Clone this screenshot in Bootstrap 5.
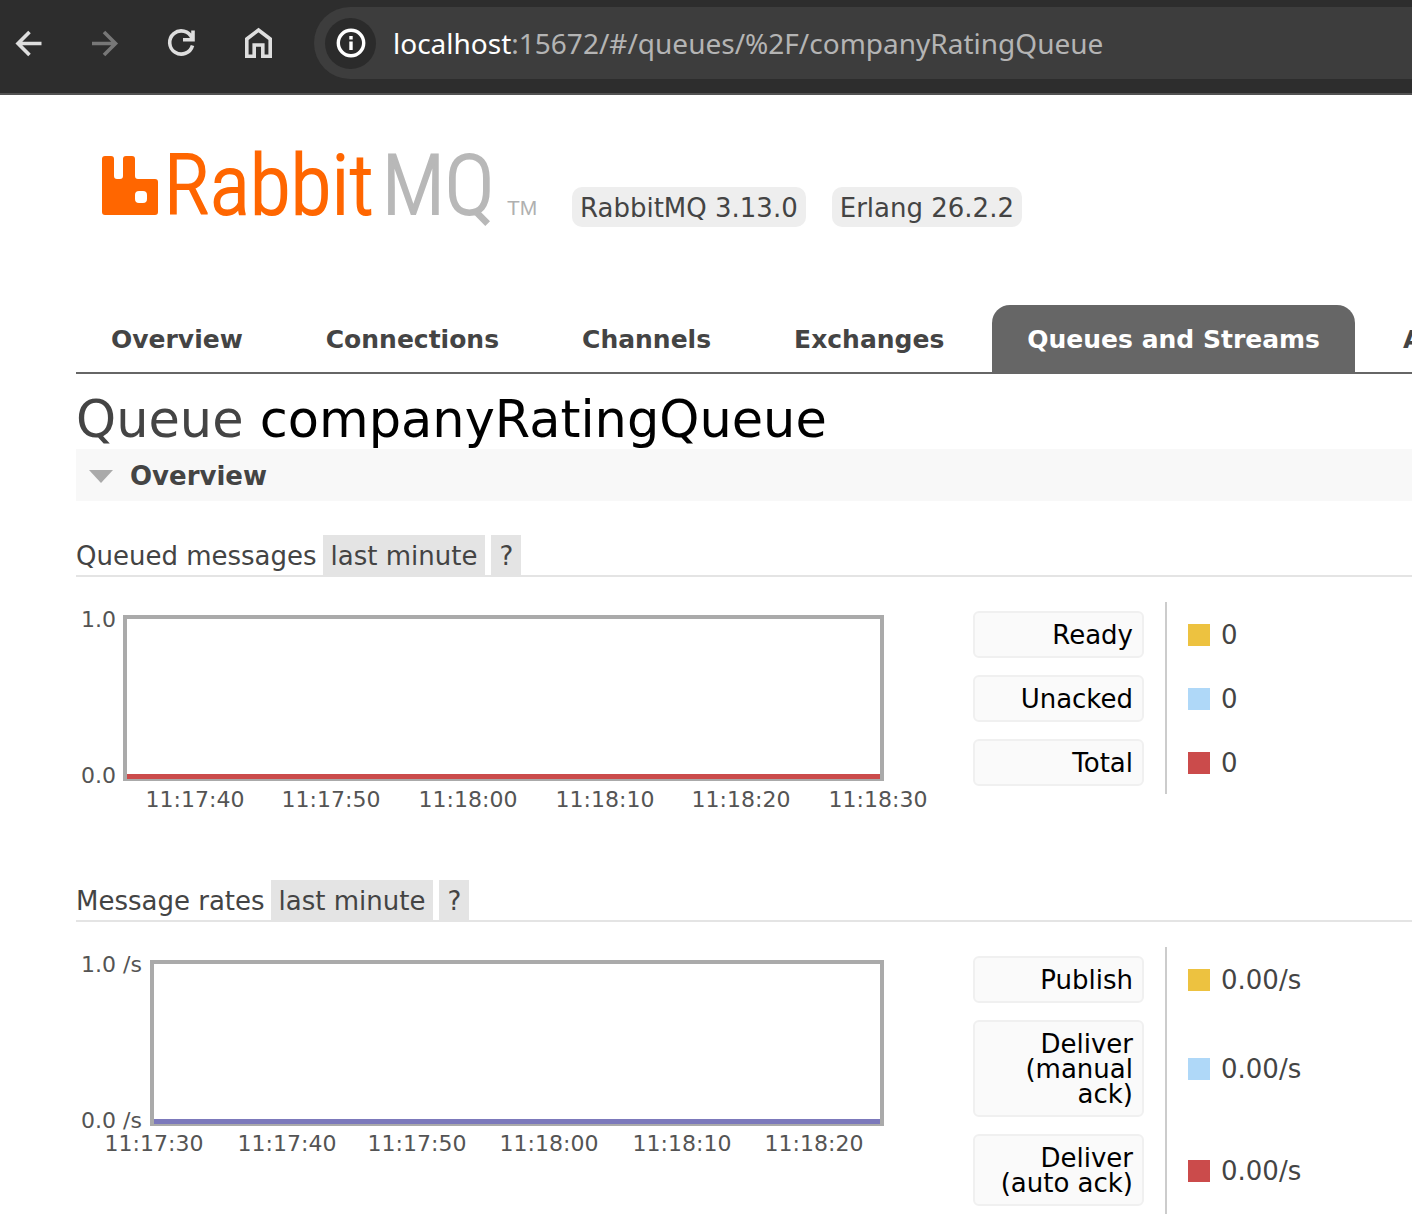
<!DOCTYPE html>
<html lang="en">
<head>
<meta charset="utf-8">
<meta name="viewport" content="width=device-width, initial-scale=1">
<title>RabbitMQ Management</title>
<link rel="stylesheet" href="https://cdn.jsdelivr.net/npm/bootstrap@5.3.0/dist/css/bootstrap.min.css">
<style>
body { font-family: "DejaVu Sans", sans-serif; font-size: 26px; line-height: 40px; color: #444; overflow-x: hidden; }
.browser-bar { height: 95px; background: #2d2d2d; border-bottom: 2px solid #525252; padding: 0 0 7px 10px; gap: 39px; overflow: hidden; }
.browser-bar button { width: 38px; height: 38px; color: #dedede; }
.browser-bar button:disabled { color: #777; border: 0; opacity: 1; }
.browser-bar svg { display: block; }
.address { height: 72px; background: #3d3d3d; border-radius: 36px 0 0 36px; padding-left: 11px; gap: 17px; margin-left: -4px; }
.browser-bar .site-info { width: 51px; height: 51px; border-radius: 50%; background: #2b2b2b; color: #fff; }
.url { font: 28px/40px "Noto Sans", sans-serif; color: #b4b4b4; white-space: nowrap; }
.url b { font-weight: 400; color: #fff; }
.page { padding-left: 76px; }
.brand-row { height: 210px; padding: 57px 0 0 26px; gap: 26px; }
.version { background: #eee; border-radius: 10px; padding: 2px 8px 0; line-height: 38px; margin-top: 35px; white-space: nowrap; }
.brand-logo { margin-right: 8px; overflow: visible; }
.tabs { border-bottom: 2px solid #666; gap: 13px; overflow: hidden; }
.tabs a { font-size: 25px; font-weight: 700; color: #444; padding: 15px 35px 12px; line-height: 40px; border-radius: 18px 18px 0 0; }
.tabs a.active { background: #666; color: #fff; }
h1 { font-size: 51px; line-height: 58px; margin: 17px 0 0; font-weight: 400; color: #444; }
h1 b { font-weight: 400; color: #000; }
h2 { background: #f8f8f8; font-size: 26px; line-height: 50px; font-weight: 700; margin: 0 0 34px; padding-top: 2px; }
h2 button { font-weight: 700; color: #444; padding-left: 13px; gap: 17px; }
h3 { font-size: 26px; line-height: 38px; font-weight: 400; margin: 0 0 25px; border-bottom: 2px solid #e4e4e4; gap: 6px; }
h3 span { padding-top: 2px; }
h3 button { background: #e4e4e4; color: #444; padding: 2px 8px 0; }
.panel { gap: 34px; }
.queued { margin-bottom: 38px; }
.plot { width: 863px; height: 240px; flex: none; }
.plot text { font-size: 22px; fill: #545454; }
.facts th { width: 193px; padding: 9px 21px 8px 0; border-right: 2px solid #ccc; font-weight: 400; }
.facts td { padding: 2px 0 0 21px; }
.facts a { display: block; background: #fafafa; border: 2px solid #f0f0f0; border-radius: 6px; padding: 10px 9px 8px; line-height: 25px; color: #000; text-align: right; }
.reading { gap: 11px; }
.swatch { width: 22px; height: 22px; }
.yellow { background: #edc240; } .blue { background: #afd8f8; } .red { background: #cb4b4b; }
</style>
<script src="https://cdn.jsdelivr.net/npm/bootstrap@5.3.0/dist/js/bootstrap.bundle.min.js"></script>
</head>
<body>
<header class="browser-bar d-flex align-items-center">
  <button class="border-0 bg-transparent p-0" aria-label="Back"><svg width="38" height="38" fill="none" stroke="currentColor" stroke-width="3.6"><path d="M31.500 19.500H8M19.500 8 8 19.500l11.500 11.500"/></svg></button>
  <button class="border-0 bg-transparent p-0" aria-label="Forward" disabled><svg width="38" height="38" fill="none" stroke="currentColor" stroke-width="3.600"><path d="M5 19.500h23.500M17 8 28.500 19.500 17 31"/></svg></button>
  <button class="border-0 bg-transparent p-0" aria-label="Reload"><svg width="38" height="38" fill="none" stroke="currentColor" stroke-width="3.600"><path d="M28 14A11.600 11.600 0 1 0 28.500 21.500M29 6.500v9.200H19"/></svg></button>
  <button class="border-0 bg-transparent p-0" aria-label="Home"><svg width="38" height="38" fill="none" stroke="currentColor" stroke-width="3.600"><path d="M5.800 32.300V15L17.500 6 29.200 15v17.300h-7.400V21h-8.600v11.300z"/></svg></button>
  <div class="address d-flex align-items-center flex-grow-1">
    <button class="site-info border-0 p-0 d-flex align-items-center justify-content-center" aria-label="Site information"><svg width="30" height="30" fill="none" stroke="currentColor" stroke-width="3.400"><circle cx="15" cy="15" r="12.700"/><path d="M15 13.500v8.500M15 8v3.400"/></svg></button>
    <span class="url"><b>localhost</b>:15672/#/queues/%2F/companyRatingQueue</span>
  </div>
</header>
<main class="page">
  <div class="brand-row d-flex align-items-start">
    <svg class="brand-logo" width="436" height="72" role="img" aria-label="RabbitMQ">
      <path fill="#f60" fill-rule="evenodd" d="M3 4H9Q12 4 12 7V24Q12 27 15 27H18Q21 27 21 24V7Q21 4 24 4H30Q33 4 33 7V24Q33 27 36 27H53Q56 27 56 30V60Q56 63 53 63H3Q0 63 0 60V7Q0 4 3 4ZM37 39Q33 39 33 43V47Q33 51 37 51H41Q45 51 45 47V43Q45 39 41 39Z"/>
      <g font-family="'Roboto Condensed','Liberation Sans Narrow','Liberation Sans',sans-serif" font-size="84" font-weight="300" stroke-width="2">
        <text x="62" y="62" fill="#f60" stroke="#f60">Rabbit</text><text x="280" y="62" fill="#b8b8b8" stroke="#b8b8b8">MQ</text>
      </g>
      <text x="405" y="63" font-family="Liberation Sans,sans-serif" font-size="21" fill="#b0b0b0">TM</text>
    </svg>
    <span class="version">RabbitMQ 3.13.0</span>
    <span class="version">Erlang 26.2.2</span>
  </div>
  <nav class="tabs d-flex text-nowrap">
    <a class="text-decoration-none" href="#/">Overview</a>
    <a class="text-decoration-none" href="#/connections">Connections</a>
    <a class="text-decoration-none" href="#/channels">Channels</a>
    <a class="text-decoration-none" href="#/exchanges">Exchanges</a>
    <a class="text-decoration-none active" href="#/queues" aria-current="page">Queues and Streams</a>
    <a class="text-decoration-none" href="#/users">Admin</a>
  </nav>
  <h1>Queue <b>companyRatingQueue</b></h1>
  <h2><button class="border-0 bg-transparent d-flex align-items-center py-0 w-100" aria-expanded="true"><svg width="24" height="13"><path d="M0 0h24L12 13z" fill="#aaa"/></svg>Overview</button></h2>

  <section class="queued">
    <h3 class="d-flex"><span>Queued messages</span> <button class="border-0">last minute</button> <button class="border-0">?</button></h3>
    <div class="panel d-flex align-items-start">
      <svg class="plot" role="img" aria-label="Queued messages, last minute">
        <rect x="49" y="15" width="757" height="162" fill="none" stroke="#aaa" stroke-width="4"/>
        <path d="M51 174.500H804" stroke="#cb4b4b" stroke-width="5"/>
        <text x="5" y="25">1.0</text><text x="5" y="181">0.0</text>
        <g text-anchor="middle"><text x="119" y="205">11:17:40</text><text x="255" y="205">11:17:50</text><text x="392" y="205">11:18:00</text><text x="529" y="205">11:18:10</text><text x="665" y="205">11:18:20</text><text x="802" y="205">11:18:30</text></g>
      </svg>
      <table class="facts">
        <tr><th scope="row"><a class="text-decoration-none" href="#ready">Ready</a></th><td><div class="reading d-flex align-items-center"><span class="swatch yellow"></span><span>0</span></div></td></tr>
        <tr><th scope="row"><a class="text-decoration-none" href="#unacked">Unacked</a></th><td><div class="reading d-flex align-items-center"><span class="swatch blue"></span><span>0</span></div></td></tr>
        <tr><th scope="row"><a class="text-decoration-none" href="#total">Total</a></th><td><div class="reading d-flex align-items-center"><span class="swatch red"></span><span>0</span></div></td></tr>
      </table>
    </div>
  </section>

  <section>
    <h3 class="d-flex"><span>Message rates</span> <button class="border-0">last minute</button> <button class="border-0">?</button></h3>
    <div class="panel d-flex align-items-start">
      <svg class="plot" role="img" aria-label="Message rates, last minute">
        <rect x="76" y="15" width="730" height="162" fill="none" stroke="#aaa" stroke-width="4"/>
        <path d="M78 174.500H804" stroke="#7c79bb" stroke-width="5"/>
        <text x="5" y="25">1.0 /s</text><text x="5" y="181">0.0 /s</text>
        <g text-anchor="middle"><text x="78" y="204">11:17:30</text><text x="211" y="204">11:17:40</text><text x="341" y="204">11:17:50</text><text x="473" y="204">11:18:00</text><text x="606" y="204">11:18:10</text><text x="738" y="204">11:18:20</text></g>
      </svg>
      <table class="facts">
        <tr><th scope="row"><a class="text-decoration-none" href="#publish">Publish</a></th><td><div class="reading d-flex align-items-center"><span class="swatch yellow"></span><span>0.00/s</span></div></td></tr>
        <tr><th scope="row"><a class="text-decoration-none" href="#manual">Deliver (manual ack)</a></th><td><div class="reading d-flex align-items-center"><span class="swatch blue"></span><span>0.00/s</span></div></td></tr>
        <tr><th scope="row"><a class="text-decoration-none" href="#auto">Deliver (auto ack)</a></th><td><div class="reading d-flex align-items-center"><span class="swatch red"></span><span>0.00/s</span></div></td></tr>
      </table>
    </div>
  </section>
</main>
</body>
</html>
